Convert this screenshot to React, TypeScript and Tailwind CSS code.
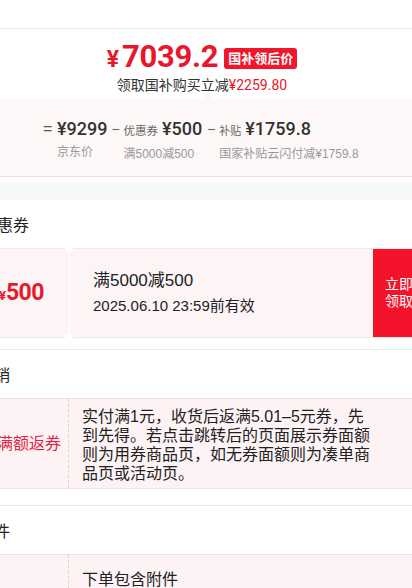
import React from "react";

const sans = "font-['Liberation_Sans','Noto_Sans_CJK_SC',sans-serif]";
const num = "font-['Roboto','Liberation_Sans','Noto_Sans_CJK_SC',sans-serif]";

function SectionTitle({ text, shift }: { text: string; shift: string }) {
  return (
    <div className="overflow-hidden pb-[12px] pt-[16px]">
      <div className={`${shift} whitespace-nowrap text-[16px] leading-[20px] text-[#222]`}>{text}</div>
    </div>
  );
}

export default function App() {
  return (
    <div className={`${sans} h-[588px] w-[412px] overflow-hidden bg-white text-[#333]`}>
      {/* top rule */}
      <div className="h-[29px] border-b border-[#e6e6e6]" />

      {/* price headline */}
      <div className="pr-[8px] pt-[11px]">
        <div className="flex h-[36px] items-center justify-center">
          <span className={`${num} flex items-baseline font-bold text-[#e8182c]`}>
            <span className="mr-[3px] text-[23px]">¥</span>
            <span className="text-[31px] leading-[36px] tracking-[-0.3px]">7039.2</span>
          </span>
          <span className="ml-[6px] rounded-[3px] bg-[#f2162c] px-[4px] text-[13px] font-bold leading-[21px] text-white">
            国补领后价
          </span>
        </div>
        <div className="flex justify-center text-[14px] leading-[18px] text-[#333]">
          领取国补购买立减<span className={`${num} text-[#e8182c]`}>¥2259.80</span>
        </div>
      </div>

      {/* price breakdown */}
      <div className="relative mt-[5px] h-[78px] border-b border-[#f6dde1] bg-[#fdf7f7] pl-[43px] pt-[19px]">
        <div className="absolute left-[203px] top-[-4px] h-[8px] w-[8px] rotate-45 bg-[#fdf7f7]" />
        <div className="flex items-start">
          <span className="w-[14px] text-[16px] leading-[22px] text-[#555]">=</span>
          <div className="flex flex-col">
            <span className={`${num} text-[18px] font-medium leading-[22px] text-[#333]`}>¥9299</span>
            <span className="mt-[4px] text-[12px] leading-[16px] text-[#999]">京东价</span>
          </div>
          <span className="ml-[4px] w-[12px] text-[14px] leading-[22px] text-[#666]">−</span>
          <div className="flex flex-col">
            <span className="flex items-baseline leading-[22px]">
              <span className="text-[11.5px] text-[#666]">优惠券</span>
              <span className={`${num} ml-[4px] text-[18px] font-medium text-[#333]`}>¥500</span>
            </span>
            <span className="mt-[4px] text-[12px] leading-[16px] text-[#999]">满5000减500</span>
          </div>
          <span className="ml-[5px] w-[12px] text-[14px] leading-[22px] text-[#666]">−</span>
          <div className="flex flex-col">
            <span className="flex items-baseline leading-[22px]">
              <span className="text-[11px] text-[#666]">补贴</span>
              <span className={`${num} ml-[4px] text-[18px] font-medium text-[#333]`}>¥1759.8</span>
            </span>
            <span className="mt-[4px] text-[12px] leading-[16px] text-[#999]">国家补贴云闪付减¥1759.8</span>
          </div>
        </div>
      </div>

      <div className="h-[6px]" />
      <div className="h-[17px] bg-[#f6f7fa]" />

      {/* coupons */}
      <SectionTitle text="优惠券" shift="-ml-[19px]" />
      <div className="flex h-[90px] border-y border-[#f6e6e8] bg-[#fdf4f5]">
        <div className="relative flex w-[69px] shrink-0 items-center justify-end overflow-hidden pr-[25px]">
          <span className={`${num} flex items-baseline font-bold text-[#e8182c]`}>
            <span className="text-[13px]">¥</span>
            <span className="text-[23px] tracking-[-0.5px]">500</span>
          </span>
        </div>
        <div className="relative flex flex-1 flex-col justify-center border-l border-white pl-[23px]">
          <span className="absolute left-[-5px] top-[-5px] h-[8px] w-[8px] rounded-full bg-white" />
          <span className="absolute bottom-[-5px] left-[-5px] h-[8px] w-[8px] rounded-full bg-white" />
          <span className="text-[17px] leading-[22px] text-[#222]">满5000减500</span>
          <span className="mt-[4px] text-[15px] leading-[20px] text-[#222]">2025.06.10 23:59前有效</span>
        </div>
        <div className="flex w-[39px] shrink-0 flex-col justify-center overflow-hidden bg-[#f3142c] pl-[12px] text-[14px] leading-[17px] text-white">
          <span className="whitespace-nowrap">立即</span>
          <span className="whitespace-nowrap">领取</span>
        </div>
      </div>

      <div className="h-[12px] border-b border-[#ececec]" />

      {/* promotions */}
      <SectionTitle text="促销" shift="-ml-[22px]" />
      <div className="flex h-[91px] border-y border-[#f2dfe2] bg-[#fdf3f5]">
        <div className="flex w-[69px] shrink-0 items-center overflow-hidden border-r border-dashed border-[#e8cdd1]">
          <span className="-ml-[3px] whitespace-nowrap text-[16px] text-[#e4223e]">满额返券</span>
        </div>
        <div className="w-[310px] py-[8px] pl-[13px] text-[16px] leading-[19px] text-[#222]">
          实付满1元，收货后返满5.01–5元券，先到先得。若点击跳转后的页面展示券面额则为用券商品页，如无券面额则为凑单商品页或活动页。
        </div>
      </div>

      <div className="h-[17px] border-b border-[#ececec]" />

      {/* accessories */}
      <SectionTitle text="附件" shift="-ml-[22px]" />
      <div className="flex h-[60px] border-t border-[#f2dfe2] bg-[#fdf3f5]">
        <div className="w-[69px] shrink-0 border-r border-dashed border-[#e8cdd1]" />
        <div className="pl-[13px] pt-[15px] text-[16px] leading-[20px] text-[#222]">下单包含附件</div>
      </div>
    </div>
  );
}
